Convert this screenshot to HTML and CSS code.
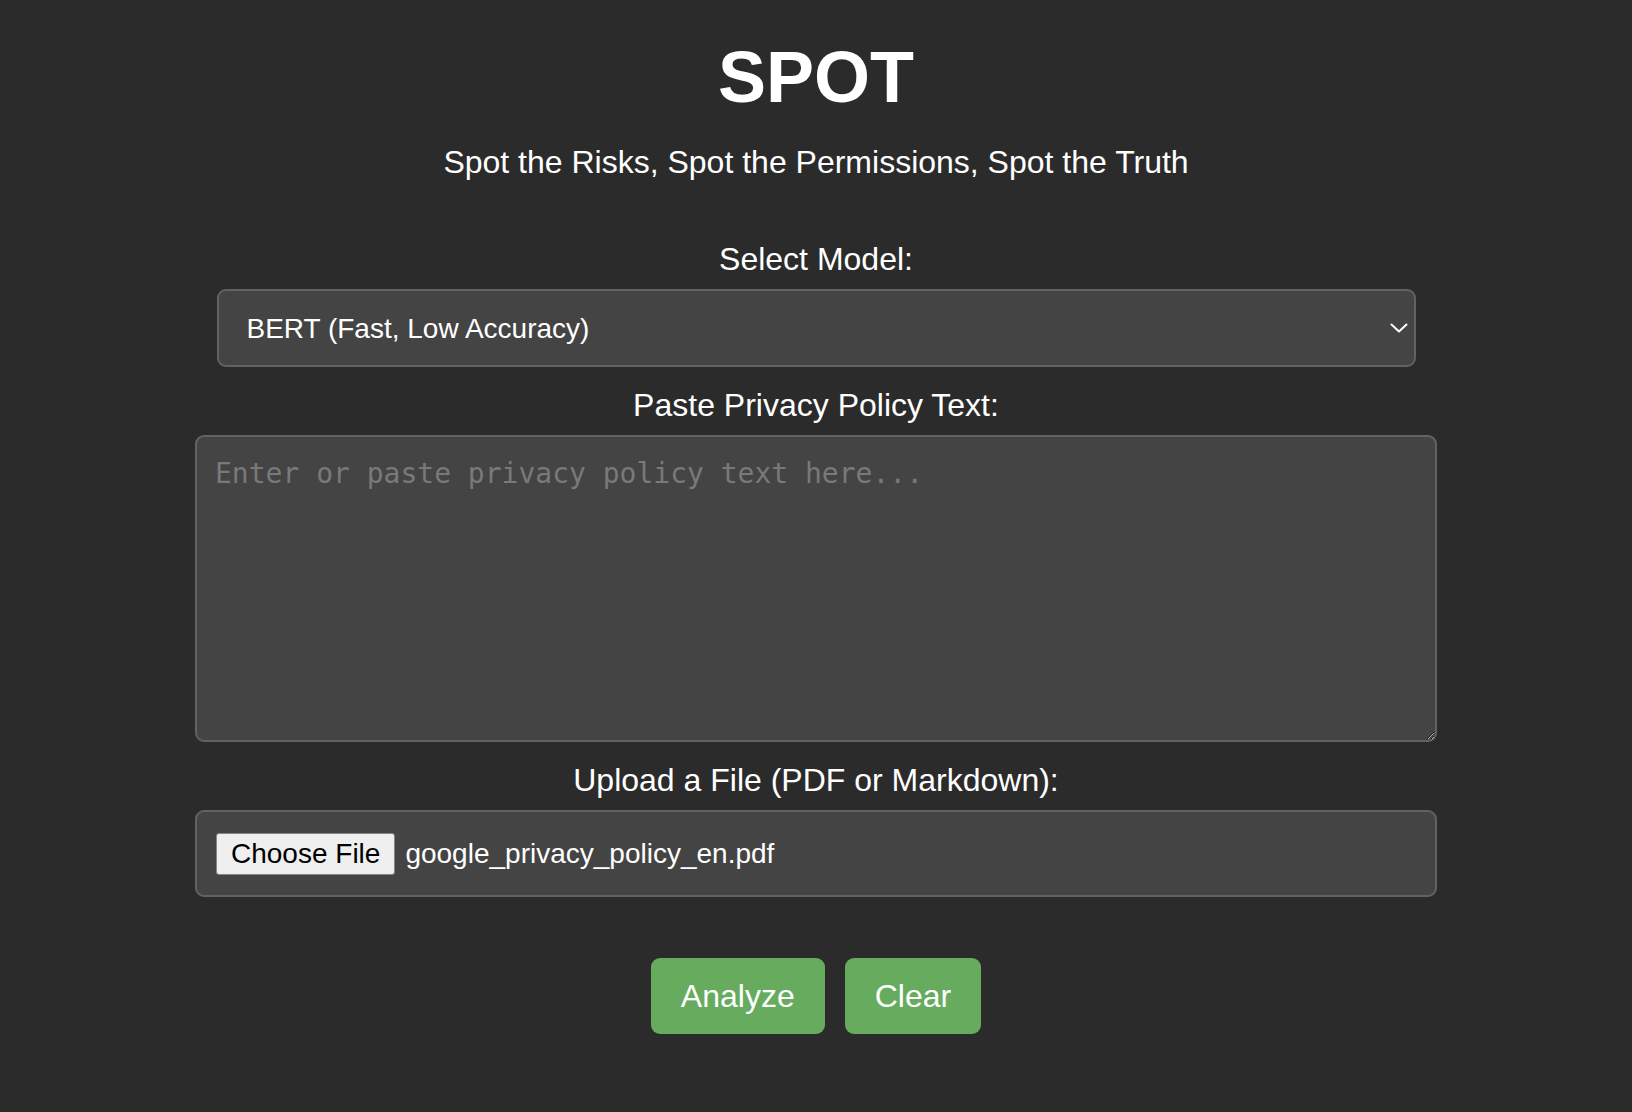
FILE: index.html
```html
<!DOCTYPE html>
<html lang="en">
<head>
<meta charset="utf-8">
<title>SPOT</title>
<link rel="stylesheet" href="styles.css">
</head>
<body>
<main class="page">
  <h1 class="title">SPOT</h1>
  <p class="subtitle">Spot the Risks, Spot the Permissions, Spot the Truth</p>

  <form class="form">
    <div class="group">
      <label class="label" for="model">Select Model:</label>
      <div class="select-wrap">
        <select id="model" class="select">
          <option>BERT (Fast, Low Accuracy)</option>
        </select>
        <svg class="chevron" width="18" height="10" viewBox="0 0 18 10" aria-hidden="true">
          <path d="M1.5 1.5 L9 8.5 L16.5 1.5" fill="none" stroke="#ffffff" stroke-width="2" stroke-linecap="round" stroke-linejoin="round"/>
        </svg>
      </div>
    </div>

    <div class="group">
      <label class="label" for="policy">Paste Privacy Policy Text:</label>
      <textarea id="policy" class="textarea" placeholder="Enter or paste privacy policy text here..."></textarea>
    </div>

    <div class="group">
      <label class="label">Upload a File (PDF or Markdown):</label>
      <div class="file-box">
        <span class="file-btn">Choose File</span>
        <span class="file-name">google_privacy_policy_en.pdf</span>
      </div>
    </div>

    <div class="actions">
      <button type="button" class="btn">Analyze</button>
      <button type="button" class="btn">Clear</button>
    </div>
  </form>
</main>
</body>
</html>
```

FILE: styles.css
```css
* {
  box-sizing: border-box;
}

html, body {
  margin: 0;
  padding: 0;
}

body {
  background: #2b2b2b;
  color: #ffffff;
  font-family: "Liberation Sans", Arial, Helvetica, sans-serif;
  min-height: 1112px;
}

.page {
  width: 1242px;
  margin: 0 auto;
  padding-top: 36px;
  text-align: center;
}

.title {
  margin: 0;
  font-size: 72px;
  line-height: 83px;
  font-weight: 700;
}

.subtitle {
  margin: 25px 0 0;
  font-size: 32px;
  line-height: 37px;
}

.form {
  margin-top: 60px;
  display: flex;
  flex-direction: column;
  gap: 20px;
}

.group {
  display: flex;
  flex-direction: column;
  align-items: center;
}

.label {
  display: block;
  font-size: 32px;
  line-height: 37px;
  margin-bottom: 11px;
}

.select-wrap {
  position: relative;
  width: 1199px;
}

.select {
  -webkit-appearance: none;
  appearance: none;
  width: 100%;
  height: 78px;
  background: #444444;
  color: #ffffff;
  border: 2px solid #626262;
  border-radius: 9px;
  padding: 0 50px 0 28px;
  font-family: "Liberation Sans", Arial, Helvetica, sans-serif;
  font-size: 28px;
  outline: none;
}

.chevron {
  position: absolute;
  right: 8px;
  top: 34px;
  pointer-events: none;
}

.textarea {
  display: block;
  width: 100%;
  height: 307px;
  background: #444444;
  color: #ffffff;
  border: 2px solid #626262;
  border-radius: 9px;
  padding: 20px 18px;
  font-family: "DejaVu Sans Mono", Menlo, monospace;
  font-size: 28px;
  resize: vertical;
  outline: none;
  color-scheme: dark;
}

.textarea::placeholder {
  color: #797979;
}

.file-box {
  width: 100%;
  height: 87px;
  display: flex;
  align-items: center;
  gap: 10px;
  background: #444444;
  border: 2px solid #626262;
  border-radius: 9px;
  padding: 0 19px;
}

.file-btn {
  display: flex;
  align-items: center;
  height: 42px;
  padding: 0 14px;
  background: #efefef;
  color: #000000;
  border: 1px solid #858585;
  border-radius: 3px;
  font-size: 28px;
}

.file-name {
  font-size: 28px;
  color: #ffffff;
}

.actions {
  margin-top: 41px;
  display: flex;
  justify-content: center;
  gap: 20px;
}

.btn {
  height: 76px;
  padding: 0 30px;
  background: #66ab5e;
  color: #ffffff;
  border: none;
  border-radius: 9px;
  font-family: "Liberation Sans", Arial, Helvetica, sans-serif;
  font-size: 32px;
  cursor: pointer;
}
```
